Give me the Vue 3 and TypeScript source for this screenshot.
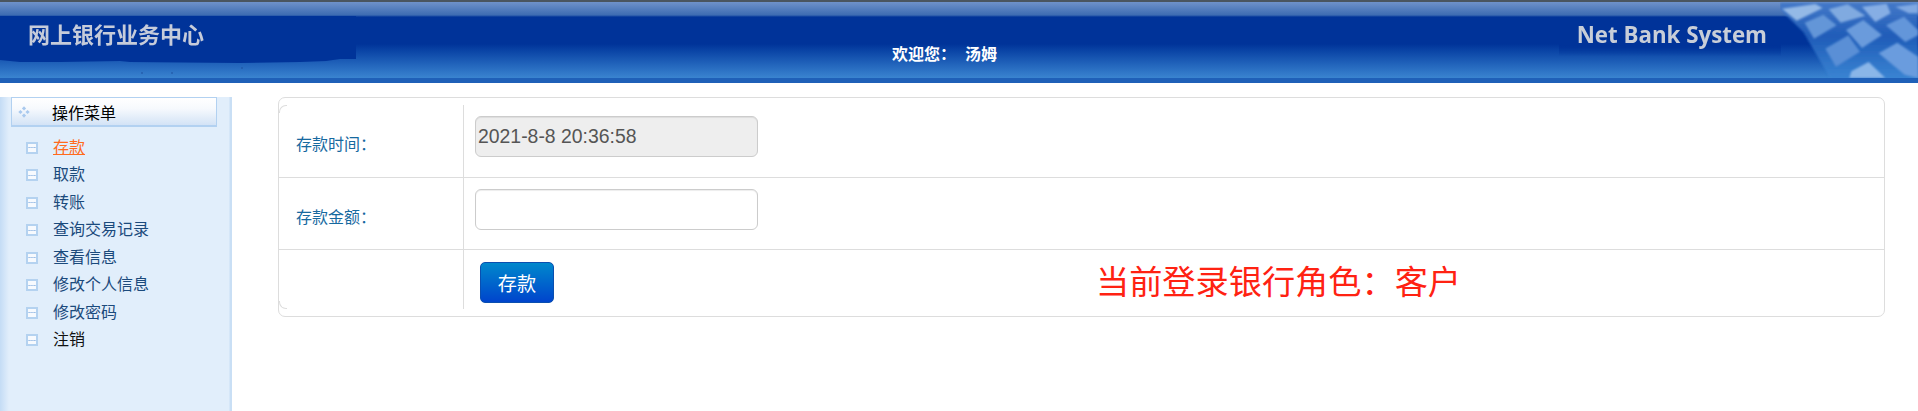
<script setup lang="ts">
import { ref } from 'vue'

interface MenuItem {
  label: string
  tone?: 'active' | 'dark'
}

const menuItems: MenuItem[] = [
  { label: '存款', tone: 'active' },
  { label: '取款' },
  { label: '转账' },
  { label: '查询交易记录' },
  { label: '查看信息' },
  { label: '修改个人信息' },
  { label: '修改密码' },
  { label: '注销', tone: 'dark' },
]

// keyboard picture in the top right corner, coords are 3x the real size
const keys = [
  { points: '6,26 106,12 128,24 50,62', fill: '#94b9e6' },
  { points: '74,68 130,44 170,76 102,116', fill: '#6496d8' },
  { points: '146,28 203,13 256,47 182,68', fill: '#80aae0' },
  { points: '198,90 250,60 306,105 246,144', fill: '#6a9bdc' },
  { points: '136,146 205,106 240,155 168,200', fill: '#5a8fd6' },
  { points: '246,20 320,11 332,40 286,66', fill: '#86aee4' },
  { points: '318,76 372,50 414,90 414,106 376,126', fill: '#6496da' },
  { points: '296,160 352,128 414,170 414,234 374,224', fill: '#6a9cde' },
  { points: '214,214 266,186 316,234 208,234', fill: '#8ab6e8' },
  { points: '346,20 414,11 414,40 386,40', fill: '#80a9e2' },
]

const amount = ref('')
</script>

<template>
  <div class="page">
    <header class="top">
      <div class="brand">
        <svg class="brand-bg" width="356" height="60" viewBox="0 0 356 60">
          <path
            d="M0 0H356V43L340 43L326 45L300 46L240 47L130 46L120 45L60 46L20 46L0 44Z"
            fill="#003399"
          />
          <circle cx="142" cy="57" r="0.8" fill="#1c4f9c" />
          <circle cx="172" cy="57" r="0.8" fill="#1c4f9c" />
          <circle cx="242" cy="52" r="0.8" fill="#1c4f9c" />
        </svg>
        <span class="brand-title">网上银行业务中心</span>
      </div>
      <div class="welcome">欢迎您：&nbsp;&nbsp;汤姆</div>
      <div class="system">Net Bank System</div>
      <svg class="keyboard" width="138" height="78" viewBox="0 0 414 234">
        <defs>
          <linearGradient id="kbBase" x1="0" y1="0" x2="0" y2="1">
            <stop offset="0" stop-color="#4479c8" />
            <stop offset="0.45" stop-color="#1f5cb8" />
            <stop offset="1" stop-color="#3a84d2" />
          </linearGradient>
          <filter id="kbBlur"><feGaussianBlur stdDeviation="3.2" /></filter>
        </defs>
        <polygon points="0,8 414,8 414,234 150,234 70,96 0,28" fill="url(#kbBase)" filter="url(#kbBlur)" />
        <polygon
          v-for="key in keys"
          :key="key.points"
          :points="key.points"
          :fill="key.fill"
          filter="url(#kbBlur)"
        />
      </svg>
    </header>

    <div class="body">
      <aside class="side">
        <div class="side-head">
          <span class="head-icon"><i></i><i></i><i></i><i></i></span>
          <span>操作菜单</span>
        </div>
        <ul class="menu">
          <li v-for="item in menuItems" :key="item.label" class="menu-item">
            <span class="box-icon"></span>
            <a :class="['menu-link', item.tone]">{{ item.label }}</a>
          </li>
        </ul>
      </aside>

      <main class="content">
        <div class="card">
          <div class="form-table">
            <div class="row row-first">
              <div class="cell-label">存款时间：</div>
              <div class="cell-value">
                <input class="field" type="text" value="2021-8-8 20:36:58" disabled />
              </div>
            </div>
            <div class="row row-second">
              <div class="cell-label">存款金额：</div>
              <div class="cell-value">
                <input v-model="amount" class="field" type="text" />
              </div>
            </div>
            <div class="row row-last">
              <div class="cell-label"></div>
              <div class="cell-value cell-action">
                <button class="btn" type="button">存款</button>
                <span class="role-tip">当前登录银行角色：客户</span>
              </div>
            </div>
          </div>
        </div>
      </main>
    </div>
  </div>
</template>

<style>
html,
body {
  margin: 0;
  padding: 0;
  background: #fff;
  overflow: hidden;
}
</style>

<style scoped>
.page {
  display: flex;
  flex-direction: column;
  height: 411px;
  overflow: hidden;
  font-family: 'Liberation Sans', 'Noto Sans CJK SC', sans-serif;
}

/* header */
.top {
  position: relative;
  display: flex;
  flex: none;
  height: 83px;
  background: linear-gradient(
    to bottom,
    #4a5560 0,
    #4a5560 2px,
    #6f92ca 2px,
    #3d6cb2 15px,
    #003399 17px,
    #003399 44px,
    #0c47a8 52px,
    #3a84d0 78px,
    #1f60b8 78px,
    #1f60b8 83px
  );
}
.brand {
  position: relative;
  flex: none;
  width: 356px;
  height: 60px;
  margin-top: 16px;
}
.brand-bg {
  position: absolute;
  left: 0;
  top: 0;
}
.brand-title {
  position: absolute;
  left: 28px;
  top: 5px;
  font-size: 22px;
  line-height: 30px;
  font-weight: 700;
  color: #c6ccda;
  white-space: nowrap;
  filter: blur(0.4px);
}
.welcome {
  flex: none;
  margin: 43px 0 0 536px;
  font-size: 16px;
  line-height: 24px;
  font-weight: 700;
  color: #fff;
  white-space: nowrap;
}
.system {
  flex: none;
  height: 36px;
  margin: 20px 137px 0 auto;
  padding: 0 14px 0 18px;
  font-family: 'Open Sans', sans-serif;
  font-size: 22.3px;
  line-height: 30px;
  font-weight: 700;
  color: #c8ced8;
  white-space: nowrap;
  filter: blur(0.4px);
  background: linear-gradient(to bottom, #003399 70%, rgba(0, 51, 153, 0));
}
.keyboard {
  position: absolute;
  right: 0;
  top: 0;
}

/* body */
.body {
  display: flex;
  flex: 1;
  min-height: 0;
  padding-top: 14px;
}

/* left menu */
.side {
  flex: none;
  box-sizing: border-box;
  width: 232px;
  padding-left: 11px;
  background: linear-gradient(
    to right,
    #c4dcf5 0,
    #e1eefb 9px,
    #e1eefb 229px,
    #c9dff5 230px,
    #c9dff5 232px
  );
}
.side-head {
  display: flex;
  align-items: center;
  box-sizing: border-box;
  width: 206px;
  height: 30px;
  border: 1px solid #b2d1f1;
  border-bottom-width: 2px;
  background: linear-gradient(to bottom, #fff 0, #f6f9fd 40%, #d3e3f6 100%);
  color: #000;
  font-size: 16px;
}
.head-icon {
  display: grid;
  grid-template-columns: 3px 3px;
  gap: 2px;
  margin: 0 24px 0 8px;
  transform: rotate(45deg);
}
.head-icon i {
  width: 3px;
  height: 3px;
  background: #a9c9ee;
}
.menu {
  margin: 7px 0 0;
  padding: 0;
  list-style: none;
}
.menu-item {
  display: flex;
  align-items: center;
  height: 27.5px;
  padding-left: 15px;
}
.box-icon {
  flex: none;
  box-sizing: border-box;
  width: 12px;
  height: 12px;
  margin-right: 15px;
  border: 2px solid #b4d2f0;
  background: radial-gradient(circle, #9fc0e6 0.8px, transparent 1px) 0 center / 2.6px 3px repeat-x, #f7fafe;
}
.menu-link {
  font-size: 16px;
  line-height: 24px;
  color: #1b4a7c;
}
.menu-link.active {
  color: #ff6a1c;
  text-decoration: underline;
}
.menu-link.dark {
  color: #111;
}

/* form */
.content {
  flex: 1;
  min-width: 0;
  padding: 0 33px 0 46px;
}
.card {
  box-sizing: border-box;
  height: 220px;
  padding: 7px 0;
  border: 1px solid #ddd;
  border-radius: 7px;
}
.form-table {
  position: relative;
}
.form-table::before,
.form-table::after {
  content: '';
  position: absolute;
  left: 0;
  width: 7px;
  height: 7px;
  border-left: 1px solid #ddd;
}
.form-table::before {
  top: 0;
  border-top: 1px solid #ddd;
  border-top-left-radius: 7px;
}
.form-table::after {
  bottom: 0;
  border-bottom: 1px solid #ddd;
  border-bottom-left-radius: 7px;
}
.row {
  display: flex;
  box-sizing: border-box;
  border-bottom: 1px solid #ddd;
}
.row-first {
  height: 73px;
}
.row-first .cell-label {
  padding-top: 3px;
}
.row-second {
  height: 72px;
}
.row-last {
  height: 59px;
  border-bottom: 0;
}
.cell-label {
  flex: none;
  box-sizing: border-box;
  display: flex;
  align-items: center;
  width: 185px;
  padding: 5px 0 0 17px;
  border-right: 1px solid #ddd;
  color: #16699f;
  font-size: 16px;
}
.cell-value {
  flex: 1;
  min-width: 0;
  padding: 11px 0 0 11px;
}
.field {
  display: block;
  box-sizing: border-box;
  width: 283px;
  height: 41px;
  margin: 0;
  padding: 0 2px;
  border: 1px solid #ccc;
  border-radius: 6px;
  background: #fff;
  box-shadow: inset 0 1px 1px rgba(0, 0, 0, 0.075);
  color: #555;
  font-family: inherit;
  font-size: 19.4px;
  outline: none;
}
.field:disabled {
  background: #eee;
  opacity: 1;
  -webkit-text-fill-color: #555;
}
.cell-action {
  display: flex;
  align-items: flex-start;
  padding: 12px 0 0 16px;
}
.btn {
  flex: none;
  box-sizing: border-box;
  width: 74px;
  height: 41px;
  margin: 0;
  padding: 0;
  border: 1px solid #0a4fb0;
  border-radius: 5px;
  background: linear-gradient(to bottom, #0088cc, #0044cc);
  color: #fff;
  font-family: inherit;
  font-size: 19.2px;
  cursor: pointer;
}
.role-tip {
  margin: 0 0 0 542px;
  color: #ff2212;
  font-size: 33.2px;
  line-height: 41px;
  white-space: nowrap;
}
</style>
